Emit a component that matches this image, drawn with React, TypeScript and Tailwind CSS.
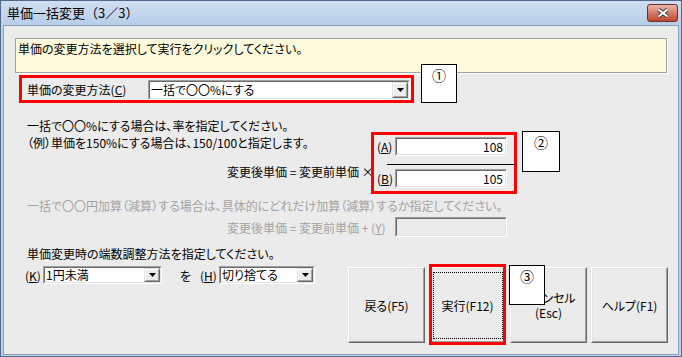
import React from "react";

const FONT = "[font-family:'Noto_Sans_CJK_JP','Noto_Sans_CJK_SC',sans-serif] [font-feature-settings:'palt']";

function Sunken({ className = "", inner = "", children }: { className?: string; inner?: string; children?: React.ReactNode }) {
  return (
    <div className={`border border-t-[#a0a0a0] border-l-[#a0a0a0] border-b-white border-r-white ${className}`}>
      <div className={`h-full w-full border border-t-[#696969] border-l-[#696969] border-b-[#e3e3e3] border-r-[#e3e3e3] ${inner}`}>
        {children}
      </div>
    </div>
  );
}

function DropBtn() {
  return (
    <div className="h-full w-[16px] border border-t-[#e3e3e3] border-l-[#e3e3e3] border-b-[#696969] border-r-[#696969]">
      <div className="h-full w-full border border-t-white border-l-white border-b-[#a0a0a0] border-r-[#a0a0a0] bg-[#ececec] flex items-center justify-center">
        <svg width="7" height="4" viewBox="0 0 7 4">
          <polygon points="0,0 7,0 3.5,4" fill="#000" />
        </svg>
      </div>
    </div>
  );
}

function Combo({ className, text }: { className: string; text: string }) {
  return (
    <Sunken className={className} inner="bg-white flex items-center justify-between">
      <span className="pl-[1px] text-[12px] leading-[14px] whitespace-nowrap">{text}</span>
      <DropBtn />
    </Sunken>
  );
}

function BigButton({ children, focused = false }: { children: React.ReactNode; focused?: boolean }) {
  return (
    <div className="relative w-[77px] h-[76px] border border-t-white border-l-white border-b-[#696969] border-r-[#696969]">
      <div className="h-full w-full border border-t-[#e3e3e3] border-l-[#e3e3e3] border-b-[#a0a0a0] border-r-[#a0a0a0] flex flex-col items-center justify-center text-[12px] leading-[15px] text-center">
        {children}
      </div>
      {focused && (
        <>
          <div className="absolute left-[3px] top-[4px] right-[2px] bottom-[3px] border border-dotted border-black" />
          <div className="absolute left-[-1px] right-[-1px] top-[-4px] bottom-[-3px] border-[3px] border-[#ff0000]" />
        </>
      )}
    </div>
  );
}

function Callout({ className, text }: { className: string; text: string }) {
  return (
    <div className={`absolute bg-white border border-black flex justify-center pt-[2px] text-[14px] leading-[17px] ${className}`}>
      {text}
    </div>
  );
}

export default function App() {
  return (
    <div className={`relative w-[682px] h-[357px] overflow-hidden bg-[#bcd2ec] border border-[#50688c] flex flex-col text-black ${FONT}`}>
      {/* title bar */}
      <div className="h-[24px] flex items-center justify-between pl-[6px] pr-[3px] bg-linear-to-b from-[#d0e0f3] to-[#b7cde8]">
        <span className="text-[13px] leading-[16px] text-black [font-feature-settings:normal]">単価一括変更（3／3）</span>
        <div className="w-[31px] h-[18px] rounded-[3px] border border-[#6e2f26] bg-linear-to-b from-[#ebb8ab] via-[#d57c68] to-[#bd4630] flex items-center justify-center">
          <svg width="14" height="10" viewBox="0 0 14 10">
            <path d="M2.5 1.5 L11.5 8.5 M11.5 1.5 L2.5 8.5" stroke="#3b3b3b" strokeWidth="4" />
            <path d="M2.5 1.5 L11.5 8.5 M11.5 1.5 L2.5 8.5" stroke="#ffffff" strokeWidth="2.2" />
          </svg>
        </div>
      </div>

      {/* content */}
      <div className="flex-1 mx-[2px] mb-[1px] border border-[#8a9fbd] bg-[#ebebeb] flex flex-col">
        {/* message box */}
        <div className="mt-[12px] ml-[11px] w-[652px] h-[35px] border border-[#a0a0a0] shadow-[1px_1px_0_#ffffff] bg-[#fdfbdc] px-[2px] pt-[1px] text-[12px] leading-[17px]">
          単価の変更方法を選択して実行をクリックしてください。
        </div>

        {/* method */}
        <div className="mt-[2px] ml-[15px] w-[395px] h-[28px] border-[3px] border-[#ff0000] flex items-center justify-between pl-[5px] pr-[1px] pt-[1px]">
          <span className="text-[12px] leading-[17px] whitespace-nowrap">
            単価の変更方法(<span className="underline">C</span>)
          </span>
          <Combo className="w-[262px] h-[20px]" text="一括で〇〇%にする" />
        </div>

        {/* rate section */}
        <div className="mt-[14px] ml-[23px] flex">
          <div className="w-[344px] flex flex-col text-[12px] leading-[17px] whitespace-nowrap">
            <span>一括で〇〇%にする場合は、率を指定してください。</span>
            <span>（例）単価を150%にする場合は、150/100と指定します。</span>
            <span className="mt-[12px] pl-[200px]">変更後単価 = 変更前単価 ×</span>
          </div>
          <div className="mt-[15px] w-[146px] h-[62px] border-[3px] border-[#ff0000] flex flex-col">
            <div className="mt-[2px] h-[19px] flex items-center pl-[3px]">
              <span className="w-[18px] text-[12px] leading-[17px]">
                (<span className="underline">A</span>)
              </span>
              <Sunken className="w-[112px] h-[19px]" inner="bg-white flex items-center justify-end pr-[2px] text-[12px] leading-[14px]">
                108
              </Sunken>
            </div>
            <div className="mt-[8px] ml-[13px] mr-[-2px] h-px bg-black" />
            <div className="mt-[4px] h-[19px] flex items-center pl-[3px]">
              <span className="w-[18px] text-[12px] leading-[17px]">
                (<span className="underline">B</span>)
              </span>
              <Sunken className="w-[112px] h-[19px]" inner="bg-white flex items-center justify-end pr-[2px] text-[12px] leading-[14px]">
                105
              </Sunken>
            </div>
          </div>
        </div>

        {/* amount section (disabled) */}
        <div className="mt-[3px] ml-[23px] text-[12px] leading-[17px] text-[#a3a3a3] whitespace-nowrap">
          一括で〇〇円加算（減算）する場合は、具体的にどれだけ加算（減算）するか指定してください。
        </div>
        <div className="mt-[3px] ml-[23px] h-[20px] flex items-center">
          <span className="w-[368px] pl-[200px] text-[12px] leading-[17px] text-[#a3a3a3] whitespace-nowrap">
            変更後単価 = 変更前単価 + (<span className="underline">Y</span>)
          </span>
          <Sunken className="w-[112px] h-[20px]" />
        </div>

        {/* rounding + buttons */}
        <div className="mt-[8px] ml-[23px] flex">
          <div className="w-[321px] flex flex-col">
            <span className="text-[12px] leading-[17px] whitespace-nowrap">単価変更時の端数調整方法を指定してください。</span>
            <div className="mt-[4px] h-[18px] ml-[-2px] flex items-center text-[12px] leading-[17px]">
              <span className="w-[18px]">
                (<span className="underline">K</span>)
              </span>
              <Combo className="w-[119px] h-[18px]" text="1円未満" />
              <span className="ml-[18px] w-[12px]">を</span>
              <span className="ml-[8px] w-[19px]">
                (<span className="underline">H</span>)
              </span>
              <Combo className="w-[96px] h-[18px]" text="切り捨てる" />
            </div>
          </div>
          <div className="mt-[22px] flex gap-[4px]">
            <BigButton>戻る(F5)</BigButton>
            <BigButton focused>実行(F12)</BigButton>
            <BigButton>
              <span>キャンセル</span>
              <span>(Esc)</span>
            </BigButton>
            <BigButton>ヘルプ(F1)</BigButton>
          </div>
        </div>
      </div>

      <Callout className="left-[420px] top-[63px] w-[36px] h-[39px]" text="①" />
      <Callout className="left-[521px] top-[130px] w-[38px] h-[41px]" text="②" />
      <Callout className="left-[508px] top-[264px] w-[36px] h-[40px]" text="③" />
    </div>
  );
}
